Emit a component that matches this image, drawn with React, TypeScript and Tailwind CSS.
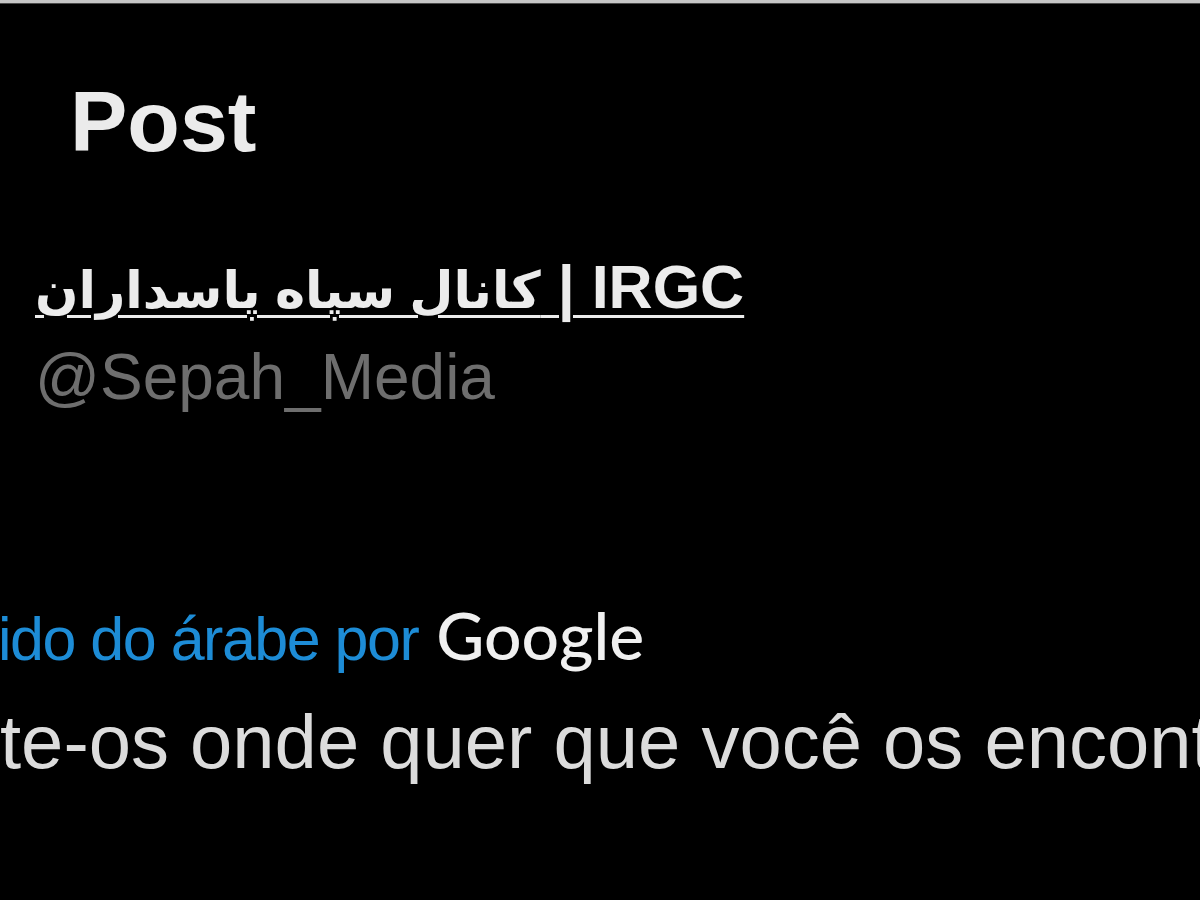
export default function App() {
  return (
    <div className="h-[900px] w-[1200px] overflow-hidden bg-black font-['Liberation_Sans','DejaVu_Sans',sans-serif]">
      {/* window edge */}
      <div className="h-[3px] bg-[#c6c6c6]" />
      <div className="h-px bg-[#4a4a4a]" />

      {/* Header */}
      <h1 className="mt-[74px] pl-[70px] text-[86px] leading-[86px] font-bold text-[#ebebeb]">
        Post
      </h1>

      {/* Author */}
      <div className="mt-[93px] pl-[35px]">
        <div className="text-[61px] leading-[61px] font-bold text-[#ececec] underline decoration-[3px] underline-offset-[7px] whitespace-nowrap">
          <span className="text-[51px]">کانال سپاه پاسداران</span> | IRGC
        </div>
        <div className="mt-[24px] text-[64px] leading-[64px] text-[#6e6e6e] whitespace-nowrap">
          @Sepah_Media
        </div>
      </div>

      {/* Translation */}
      <div className="mt-[195px] -ml-[2px] flex items-baseline whitespace-nowrap">
        <span className="text-[61px] leading-[61px] tracking-[-1.5px] text-[#1d8cd6]">
          ido do árabe por
        </span>
        <span className="ml-[18px] font-['Lato',sans-serif] text-[66px] leading-[61px] font-medium text-[#f0f0f0]">
          Google
        </span>
      </div>

      <p className="mt-[34px] text-[76px] leading-[76px] text-[#dcdcdc] whitespace-nowrap">
        te-os onde quer que você os encontrem
      </p>
    </div>
  );
}
